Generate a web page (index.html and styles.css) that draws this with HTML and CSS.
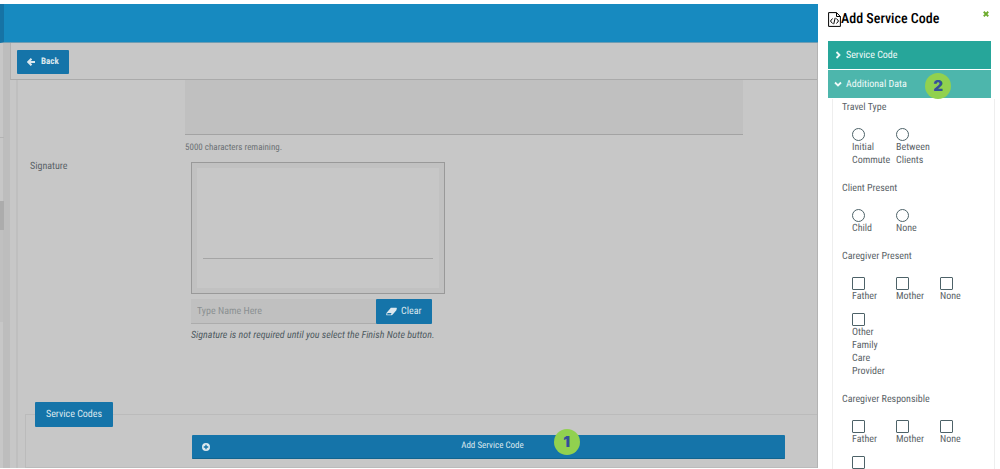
FILE: index.html
```html
<!DOCTYPE html>
<html lang="en">
<head>
  <meta charset="UTF-8" />
  <meta name="viewport" content="width=device-width, initial-scale=1" />
  <title>Add Service Code</title>
  <link rel="stylesheet" href="styles.css">
</head>
<body>
  <div class="page">
    <header class="topbar"></header>
    <div class="layout">
      <div class="rail">
        <div class="rail-head"></div>
        <div class="rail-space"></div>
        <div class="rail-thumb"></div>
        <div class="rail-list"></div>
      </div>
      <main class="main">
        <div class="toolbar">
          <button type="button" class="btn back">
            <svg class="icon" viewBox="0 0 16 16" fill="none" stroke="currentColor" stroke-width="4"><path d="M9 1.500 2.500 8 9 14.500M3 8h13"/></svg>
            Back
          </button>
        </div>
        <form class="note">
          <div class="row">
            <div></div>
            <div class="field">
              <textarea class="comments" aria-label="Comments"></textarea>
              <div class="hint">5000 characters remaining.</div>
            </div>
          </div>
          <div class="row">
            <label for="signName">Signature</label>
            <div class="signature">
              <div class="pad"><div class="pad-inner"></div></div>
              <div class="sign-name">
                <input type="text" id="signName" placeholder="Type Name Here">
                <button type="button" class="btn clear">
                  <svg class="icon" viewBox="0 0 18 14"><path fill="currentColor" fill-rule="evenodd" d="M8 1h9q1 0 .7 1.2L17 5l-6 7q-1 1-2 1H1q-1 0-.6-1.2L1 9l6-7q.4-1 1-1zM2.500 9.500h6.500L8 11.800H1.800z"/></svg>
                  Clear
                </button>
              </div>
              <p class="required">Signature is not required until you select the Finish Note button.</p>
            </div>
          </div>
          <fieldset class="codes">
            <legend>Service Codes</legend>
            <button type="button" class="btn add">
              <svg class="icon" viewBox="0 0 16 16"><path fill="currentColor" fill-rule="evenodd" d="M8 0a8 8 0 1 0 0 16A8 8 0 0 0 8 0zM6.700 3.500h2.600v3.200h3.200v2.600H9.300v3.200H6.700V9.300H3.500V6.700h3.200z"/></svg>
              <span class="add-text">Add Service Code</span>
              <span class="badge badge-one">1</span>
            </button>
          </fieldset>
        </form>
      </main>
    </div>
  </div>

  <aside class="drawer">
    <div class="drawer-head">
      <svg class="file-icon" viewBox="0 0 13 15" fill="none" stroke="currentColor"><path d="M.6.6h7.900l3.900 3.900v9.900H.6zM8.500.6v3.900h3.900"/><path d="M4.500 6.500 2.500 9l2 2.500M8.500 6.500l2 2.500-2 2.500M7.200 5.800l-1.500 6.400"/></svg>
      <h1>Add Service Code</h1>
      <button type="button" class="close" aria-label="Close">
        <svg viewBox="0 0 8 8" stroke="currentColor" stroke-width="2.400"><path d="M1 1l6 6M7 1 1 7"/></svg>
      </button>
    </div>
    <button type="button" class="section">
      <svg viewBox="0 0 8 8" fill="none" stroke="currentColor" stroke-width="1.800"><path d="M2.500 1l3 3-3 3"/></svg>
      Service Code
    </button>
    <button type="button" class="section open">
      <svg viewBox="0 0 8 8" fill="none" stroke="currentColor" stroke-width="1.800"><path d="M1 2.500l3 3 3-3"/></svg>
      Additional Data
      <span class="badge badge-two">2</span>
    </button>
    <div class="section-body">
      <fieldset class="group">
        <legend>Travel Type</legend>
        <div class="options">
          <label><input type="radio" name="travel">Initial Commute</label>
          <label><input type="radio" name="travel">Between Clients</label>
        </div>
      </fieldset>
      <fieldset class="group">
        <legend>Client Present</legend>
        <div class="options">
          <label><input type="radio" name="client">Child</label>
          <label><input type="radio" name="client">None</label>
        </div>
      </fieldset>
      <fieldset class="group">
        <legend>Caregiver Present</legend>
        <div class="options">
          <label><input type="checkbox">Father</label>
          <label><input type="checkbox">Mother</label>
          <label><input type="checkbox">None</label>
          <label><input type="checkbox">Other Family Care Provider</label>
        </div>
      </fieldset>
      <fieldset class="group">
        <legend>Caregiver Responsible</legend>
        <div class="options">
          <label><input type="checkbox">Father</label>
          <label><input type="checkbox">Mother</label>
          <label><input type="checkbox">None</label>
          <label><input type="checkbox" aria-label="Other"></label>
        </div>
      </fieldset>
    </div>
  </aside>
</body>
</html>
```
FILE: styles.css
```css
* {
  box-sizing: border-box;
}
body {
  margin: 0;
  display: flex;
  height: 100vh;
  overflow: hidden;
  background: #fff;
  color: #5b6367;
  font-family: "Roboto Condensed", "Liberation Sans Narrow", "Liberation Sans", sans-serif;
  font-size: 10px;
  line-height: 13px;
  text-rendering: geometricPrecision;
}
button, input, textarea {
  font: inherit;
  text-rendering: inherit;
  margin: 0;
}
button {
  cursor: pointer;
}
fieldset {
  margin: 0;
  padding: 0;
  border: 0;
  min-width: 0;
}
.page {
  flex: 1;
  display: flex;
  flex-direction: column;
  min-width: 0;
  padding: 4px 0 1px;
}
.topbar {
  height: 39px;
  flex: none;
  background: #178ac0;
  border-left: 4px solid #1673a5;
  border-bottom: 1px solid #6f9db3;
}
.layout {
  flex: 1;
  display: flex;
  min-height: 0;
  background: #c7c7c7;
  border-right: 1px solid #b3b3b3;
}
.rail {
  width: 10px;
  flex: none;
  display: flex;
  flex-direction: column;
  background: linear-gradient(to right, #c7c7c7 3px, #bdbdbd 3px);
}
.rail-head {
  height: 95px;
  width: 4px;
  border-bottom: 1px solid #b4b4b4;
}
.rail-space {
  height: 63px;
}
.rail-thumb {
  height: 29px;
  width: 4px;
  background: #acacac;
}
.rail-list {
  height: 92px;
  width: 3px;
  background: #c0c0c0;
}
.main {
  flex: 1;
  display: flex;
  flex-direction: column;
  min-width: 0;
}
.toolbar {
  height: 37px;
  flex: none;
  padding: 7px 6px;
  border-left: 1px solid #b0b0b0;
  border-bottom: 1px solid #aaa;
}
.btn {
  display: flex;
  align-items: center;
  border: 0;
  border-radius: 1px;
  background: #1574a9;
  color: #dce8ee;
}
.icon {
  width: 8px;
  height: 8px;
  flex: none;
}
.back {
  width: 52px;
  height: 24px;
  padding: 0 10px;
  gap: 6px;
  font-size: 9px;
  font-weight: bold;
}
.note {
  flex: 1;
  margin-left: 6px;
  padding-left: 7px;
  border-left: 2px solid #bfbfbf;
}
.row {
  display: grid;
  grid-template-columns: 155px 1fr;
  padding-left: 5px;
}
.row label {
  padding-top: 2px;
}
.field {
  margin-right: 74px;
}
.comments {
  display: block;
  width: 100%;
  height: 55px;
  border: 0;
  border-bottom: 1px solid #a3a3a3;
  background: #c0c0c0;
  resize: none;
}
.hint {
  padding: 7px 0 3px;
  font-size: 9px;
  color: #6d7275;
}
.signature {
  padding: 4px 0 0 6px;
}
.pad {
  width: 254px;
  height: 132px;
  padding: 5px;
  border: 1px solid #999;
  background: #c1c1c1;
}
.pad-inner {
  height: 120px;
  background: linear-gradient(#a5a5a5, #a5a5a5) 6px 90px / 230px 1px no-repeat #c7c7c7;
}
.sign-name {
  display: flex;
  width: 241px;
  height: 25px;
  margin-top: 5px;
}
.sign-name input {
  flex: 1;
  min-width: 0;
  padding: 0 6px;
  border: 0;
  border-bottom: 1px solid #acacac;
  background: #c0c0c0;
}
.sign-name input::placeholder {
  color: #8b9092;
}
.clear {
  width: 56px;
  padding: 0 10px;
  gap: 4px;
}
.clear .icon {
  width: 11px;
  height: 9px;
}
.required {
  margin: 5px 0 60px;
  font-style: italic;
  color: #4e5a5f;
}
.codes {
  padding: 8px 32px 8px 166px;
  border: 1px solid #bbb;
  border-right: 0;
}
.codes legend {
  margin-left: -157px;
  padding: 6px 11px;
  border-radius: 1px;
  background: #1574a9;
  color: #dce8ee;
}
.add {
  position: relative;
  width: 100%;
  height: 24px;
  padding: 0 10px;
  border-bottom: 1px solid #11648f;
  font-size: 9px;
}
.add-text {
  flex: 1;
  text-align: center;
}
.badge {
  position: absolute;
  width: 26px;
  height: 26px;
  border-radius: 50%;
  background: #91d14f;
  color: #34509a;
  font-family: Inter, sans-serif;
  font-size: 15px;
  font-weight: 900;
  line-height: 26px;
  text-align: center;
}
.badge-one {
  top: -6px;
  left: 61%;
}
.badge-two {
  top: 3px;
  right: 40px;
}
.drawer {
  width: 182px;
  flex: none;
  overflow: hidden;
  padding: 9px 9px 0 10px;
  background: #fff;
}
.drawer-head {
  display: flex;
  align-items: center;
  height: 20px;
  margin-bottom: 12px;
  color: #000;
}
.file-icon {
  width: 13px;
  height: 15px;
}
.drawer-head h1 {
  flex: 1;
  margin: 0;
  font-size: 14px;
  font-weight: 500;
  line-height: 20px;
  white-space: nowrap;
}
.close {
  align-self: flex-start;
  padding: 2px;
  border: 0;
  background: none;
  color: #6cab2c;
  line-height: 0;
}
.close svg {
  width: 6px;
  height: 6px;
}
.section {
  position: relative;
  display: flex;
  align-items: center;
  gap: 4px;
  width: 100%;
  height: 28px;
  margin-bottom: 1px;
  padding: 0 6px;
  border: 0;
  background: #26a69a;
  color: #f0faf9;
}
.section.open {
  background: #4db6ac;
}
.section svg {
  width: 8px;
  height: 8px;
}
.section-body {
  margin: 0 -4px 0 4px;
  padding: 2px 9px 0;
  border: 1px solid #eee;
  border-width: 0 1px;
}
.group {
  margin-bottom: 15px;
}
.group legend {
  padding: 0;
}
.options {
  display: grid;
  grid-template-columns: repeat(3, 34px);
  gap: 10px;
  padding: 14px 0 0 10px;
}
.options input {
  appearance: none;
  display: block;
  width: 13px;
  height: 13px;
  border: 1px solid #4d6268;
  border-radius: 1px;
}
.options input[type="radio"] {
  border-radius: 50%;
}
```
